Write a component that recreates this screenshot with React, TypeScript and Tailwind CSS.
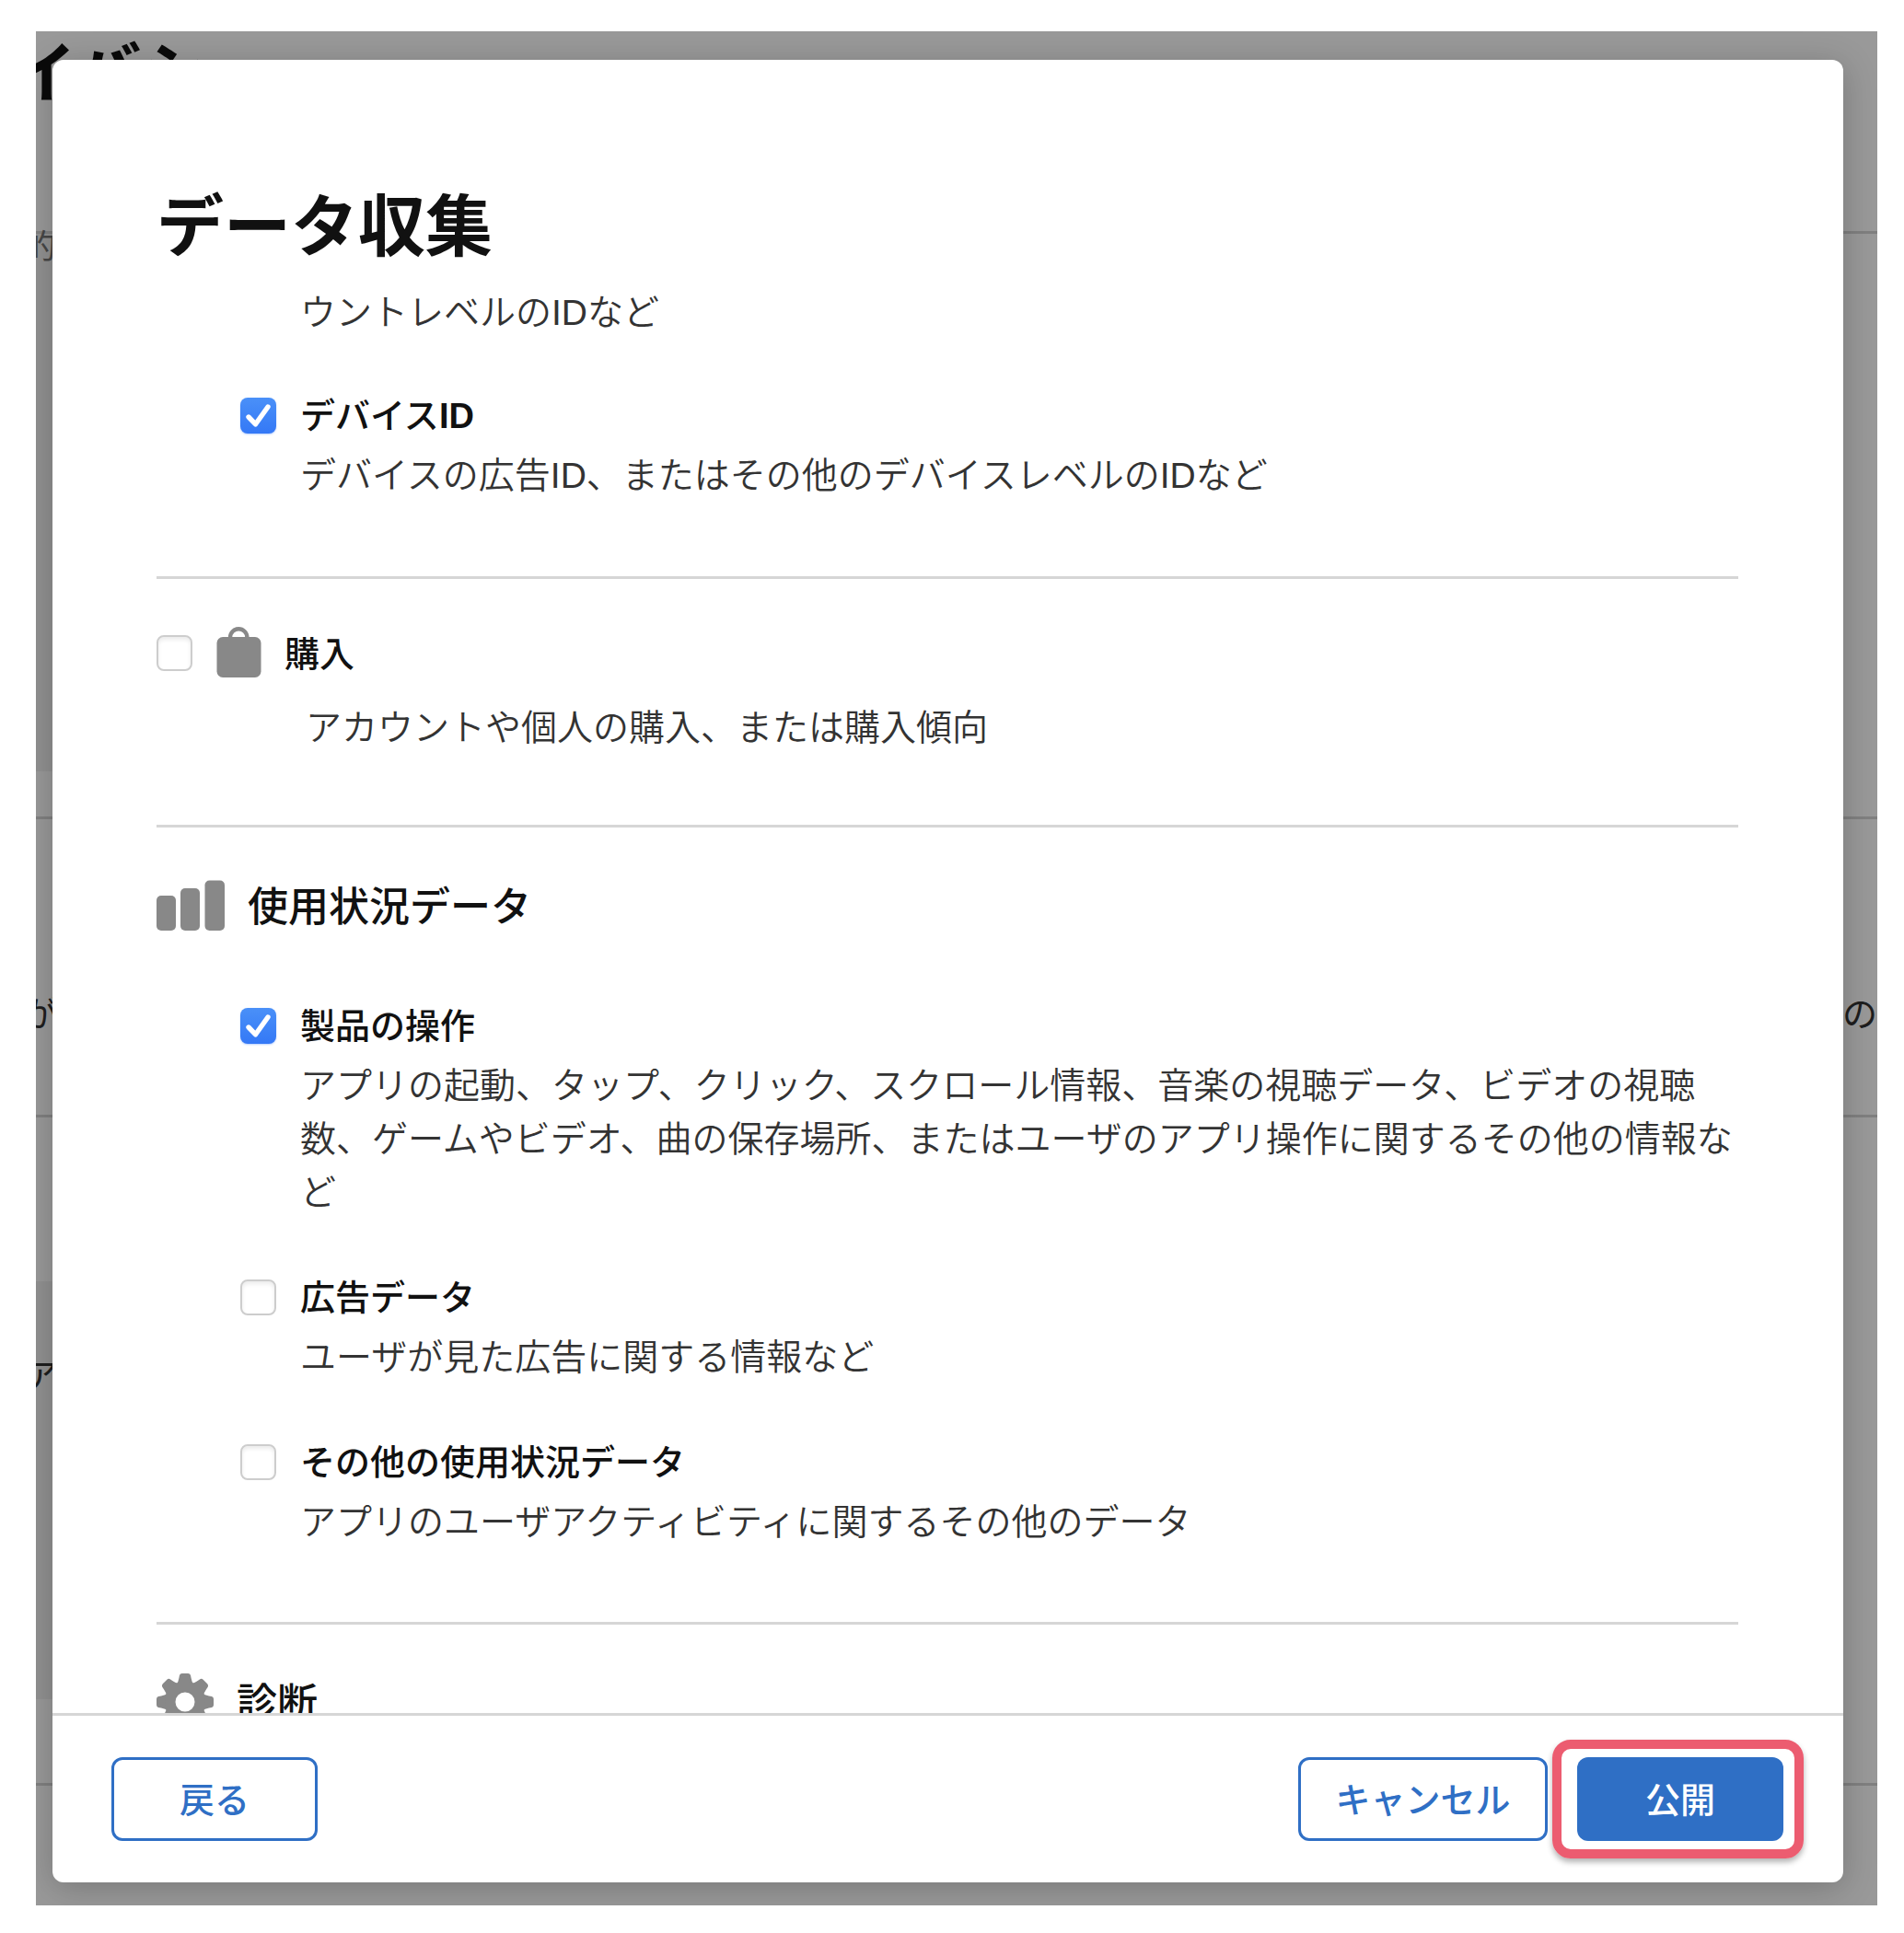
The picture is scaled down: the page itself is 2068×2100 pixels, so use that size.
import type { ReactNode } from "react";

const usageItems = [
  {
    id: "product-interaction",
    title: "製品の操作",
    text: "アプリの起動、タップ、クリック、スクロール情報、音楽の視聴データ、ビデオの視聴数、ゲームやビデオ、曲の保存場所、またはユーザのアプリ操作に関するその他の情報など",
    checked: true,
  },
  {
    id: "advertising-data",
    title: "広告データ",
    text: "ユーザが見た広告に関する情報など",
    checked: false,
  },
  {
    id: "other-usage-data",
    title: "その他の使用状況データ",
    text: "アプリのユーザアクティビティに関するその他のデータ",
    checked: false,
  },
];

function Checkbox({ id, checked }: { id: string; checked: boolean }) {
  return (
    <span className="relative block size-[39px] shrink-0">
      <input
        id={id}
        type="checkbox"
        defaultChecked={checked}
        className="peer block size-full appearance-none rounded-lg border-2 border-[#cdcdcd] bg-white shadow-[inset_0_3px_4px_rgba(0,0,0,0.08)] checked:border-0 checked:bg-linear-to-b checked:from-[#4a90f8] checked:to-[#3478f6] checked:shadow-[0_1px_2px_rgba(52,120,246,0.35)]"
      />
      <svg
        viewBox="0 0 39 39"
        className="pointer-events-none absolute inset-0 hidden size-full peer-checked:block"
        fill="none"
        stroke="white"
        strokeWidth="5.4"
        strokeLinecap="round"
        strokeLinejoin="round"
      >
        <path d="M9 21 16.6 28.8 30 10" />
      </svg>
    </span>
  );
}

type ItemProps = { id: string; title: ReactNode; text: string; checked: boolean };

function Item({ id, title, text, checked }: ItemProps) {
  return (
    <div className="flex items-start gap-[26px] pl-[91px]">
      <div className="flex h-14 items-center">
        <Checkbox id={id} checked={checked} />
      </div>
      <div className="min-w-0 flex-1">
        <label htmlFor={id} className="block text-[38px] leading-[58px] font-medium text-[#111]">
          {title}
        </label>
        <p className="mt-[7px] text-[39px] leading-[58px] font-[350]">{text}</p>
      </div>
    </div>
  );
}

function SectionTitle({ icon, children }: { icon: ReactNode; children: ReactNode }) {
  return (
    <h2 className="flex h-[58px] items-center gap-[25px] text-[44px] leading-[58px] font-medium text-[#111]">
      {icon}
      <span className="pt-1">{children}</span>
    </h2>
  );
}

function BagIcon() {
  return (
    <svg viewBox="0 0 49 56" className="h-14 w-[49px] shrink-0">
      <path d="M15 14V11.5a9.2 9.2 0 0 1 18.4 0V14" fill="none" stroke="#888" strokeWidth="4.4" />
      <rect x="0.5" y="11" width="48" height="44" rx="6.5" fill="#888" />
    </svg>
  );
}

function BarsIcon() {
  return (
    <svg viewBox="0 0 74 56" className="h-14 w-[74px] shrink-0" fill="#888">
      <rect x="0" y="17" width="21" height="38" rx="5" />
      <rect x="26" y="9" width="21" height="46" rx="5" />
      <rect x="52.5" y="0.5" width="21.5" height="54.5" rx="5" />
    </svg>
  );
}

const teeth = [0, 45, 90, 135, 180, 225, 270, 315];

function GearIcon() {
  return (
    <svg viewBox="-31 -31 62 62" className="size-[62px] shrink-0" fill="#888">
      {teeth.map((angle) => (
        <path
          key={angle}
          transform={`rotate(${angle})`}
          d="M-9.5 -19Q-7.4 -21 -6.6 -26L-6 -29Q-5.4 -31 -3.2 -31H3.2Q5.4 -31 6 -29L6.6 -26Q7.4 -21 9.5 -19Z"
        />
      ))}
      <path
        fillRule="evenodd"
        d="M0 -22A22 22 0 1 1 0 22A22 22 0 1 1 0 -22ZM0 -10.5A10.5 10.5 0 1 0 0 10.5A10.5 10.5 0 1 0 0 -10.5Z"
      />
    </svg>
  );
}

function PageBehind() {
  return (
    <div aria-hidden="true" className="absolute inset-0 overflow-hidden bg-white text-[38px] leading-[58px] text-[#333]">
      <div className="-ml-[172px] flex h-full flex-col whitespace-nowrap">
        <div className="h-[217px] shrink-0 text-[72px] leading-[92px] font-bold text-[#111]">プライバシー</div>
        <div className="h-[587px] shrink-0 border-t-3 border-[#d6d6d6]">
          <div className="mr-10 h-full bg-[#f2f2f2] pl-[158px] text-[36px] leading-[30px] text-[#777]">的</div>
        </div>
        <div className="h-[49px] shrink-0" />
        <div className="flex h-[327px] shrink-0 items-end justify-between border-y-3 border-[#d6d6d6] pb-20 pl-[158px]">
          <span>が</span>
          <span>の</span>
        </div>
        <div className="h-[178px] shrink-0" />
        <div className="mr-10 h-[454px] shrink-0 bg-[#f2f2f2] pt-[74px] pl-[158px]">ア</div>
        <div className="h-[94px] shrink-0 border-b-3 border-[#d6d6d6]" />
      </div>
      <div className="absolute inset-0 bg-black/40" />
    </div>
  );
}

export default function App() {
  return (
    <div className="flex min-h-screen bg-white pt-[34px] pr-[29px] pb-[30px] pl-[39px] font-['Liberation_Sans','Noto_Sans_CJK_JP',sans-serif] text-[#333]">
      <div className="relative flex flex-1 overflow-hidden pt-[31px] pr-[37px] pb-[25px] pl-[18px]">
        <PageBehind />
        <main
          role="dialog"
          aria-labelledby="dialog-title"
          className="relative flex flex-1 flex-col overflow-hidden rounded-xl bg-white shadow-[0_6px_36px_rgba(0,0,0,0.22)]"
        >
          <h1 id="dialog-title" className="px-[113px] pt-[132px] pb-6 text-[73px] leading-[100px] font-bold text-[#111]">
            データ収集
          </h1>

          <div className="min-h-0 flex-1 basis-0 overflow-hidden pr-[114px] pl-[113px]">
            <p className="-mt-2.5 pl-[156px] text-[39px] leading-[58px] font-[350]">ウントレベルのIDなど</p>
            <div className="pt-[54px] pb-20">
              <Item
                id="device-id"
                title={
                  <>
                    デバイス<b>ID</b>
                  </>
                }
                text="デバイスの広告ID、またはその他のデバイスレベルのIDなど"
                checked
              />
            </div>

            <section className="border-t-3 border-[#d6d6d6] pt-[51px] pb-[76px]">
              <div className="flex items-center gap-[26px]">
                <Checkbox id="purchases" checked={false} />
                <label
                  htmlFor="purchases"
                  className="flex h-[58px] items-center gap-[25px] text-[38px] leading-[58px] font-medium text-[#111]"
                >
                  <BagIcon />
                  <span className="pt-1">購入</span>
                </label>
              </div>
              <p className="mt-6 pl-[162px] text-[39px] leading-[58px] font-[350]">
                アカウントや個人の購入、または購入傾向
              </p>
            </section>

            <section className="border-t-3 border-[#d6d6d6] pt-14 pb-[79px]">
              <SectionTitle icon={<BarsIcon />}>使用状況データ</SectionTitle>
              <div className="mt-[73px] flex flex-col gap-14">
                {usageItems.map((item) => (
                  <Item key={item.id} {...item} />
                ))}
              </div>
            </section>

            <section className="border-t-3 border-[#d6d6d6] pt-[55px]">
              <SectionTitle icon={<GearIcon />}>診断</SectionTitle>
            </section>
          </div>

          <footer className="flex items-center border-t-3 border-[#d6d6d6] py-[45px] pr-[65px] pl-16 text-[38px] font-medium">
            <button type="button" className="h-[91px] w-[224px] rounded-xl border-3 border-[#2f6fc5] pt-1 text-[#2f6fc5]">
              戻る
            </button>
            <button
              type="button"
              className="mr-8 ml-auto h-[91px] w-[271px] rounded-xl border-3 border-[#2f6fc5] pt-1 text-[#2f6fc5]"
            >
              キャンセル
            </button>
            <div className="relative">
              <button type="button" className="block h-[91px] w-[224px] rounded-xl bg-[#2f6fc5] pt-1 text-white">
                公開
              </button>
              <div className="pointer-events-none absolute -inset-y-[19px] -right-[22px] -left-[27px] rounded-[20px] border-10 border-[#ec5c70] shadow-[0_4px_6px_rgba(0,0,0,0.3)]" />
            </div>
          </footer>
        </main>
      </div>
    </div>
  );
}
